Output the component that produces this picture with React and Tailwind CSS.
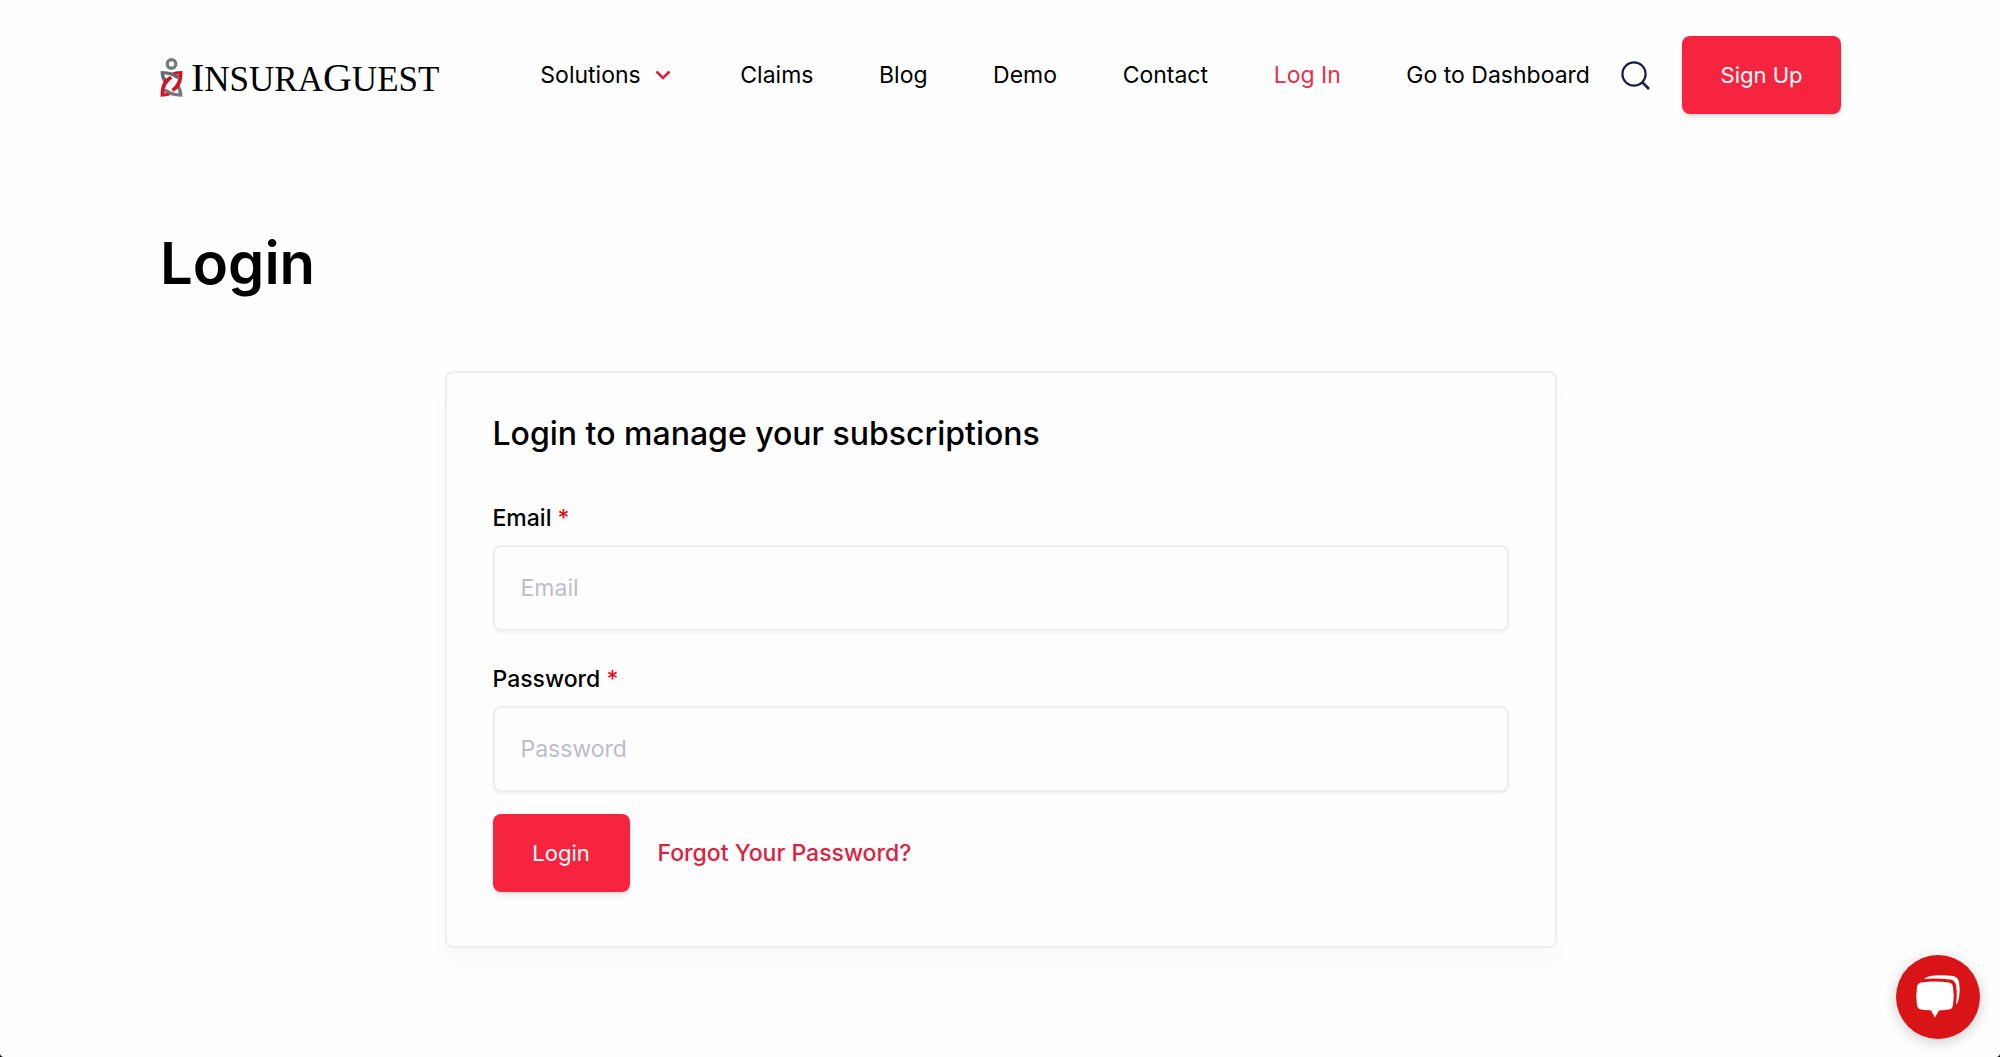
import React, { useState } from "react";

const navLinks = [
  { label: "Claims", href: "#claims" },
  { label: "Blog", href: "#blog" },
  { label: "Demo", href: "#demo" },
  { label: "Contact", href: "#contact" },
  { label: "Log In", href: "#login", active: true },
  { label: "Go to Dashboard", href: "#dashboard" },
];

const Logo = () => (
  <a href="#home" className="flex items-center gap-2 pt-1 text-black shrink-0">
    <svg width="23" height="39" viewBox="0 0 68 118" fill="none" aria-hidden="true">
      <circle cx="34" cy="18" r="13" stroke="#77787b" strokeWidth="10" />
      <path d="M1 39 Q22 39 38 44 L58 54 L52 64 L34 54 Q22 49 12 49 Q12 58 20 66 L12 76 Q1 62 1 39 Z" fill="#66686b" />
      <path d="M67 117 Q46 117 30 112 L10 102 L16 92 L34 102 Q46 107 56 107 Q56 98 49 90 L57 80 Q67 94 67 117 Z" fill="#77787b" />
      <path d="M38 43 Q50 39 67 39 Q68 66 60 82 Q52 96 40 102 L34 94 Q44 88 50 75 Q56 64 56 49 Q50 49 45 51 Z" fill="#cf1522" />
      <path d="M30 113 Q18 117 1 117 Q0 92 8 76 Q16 62 30 54 L36 63 Q24 70 18 82 Q12 94 12 107 Q18 107 23 105 Z" fill="#cf1522" />
    </svg>
    <span className="pt-1 font-['Liberation_Serif',serif] text-[35px] leading-[40px]">
      <span className="text-[40px]">I</span>NSURA
      <span className="text-[40px]">G</span>UEST
    </span>
  </a>
);

const Header = () => (
  <header className="flex items-center h-[150px]">
    <Logo />
    <nav className="flex flex-1 items-center justify-between ml-[101px] mr-[31px] text-[23px] text-black">
      <button type="button" className="flex items-center gap-[14px] mr-1">
        Solutions
        <svg width="16" height="10" viewBox="0 0 16 10" fill="none" aria-hidden="true">
          <path d="M1.5 1.5 L8 8 L14.5 1.5" stroke="#dc2038" strokeWidth="2.6" />
        </svg>
      </button>
      {navLinks.map((link) => (
        <a
          key={link.label}
          href={link.href}
          className={link.active ? "text-[#ea3048]" : "text-black"}
        >
          {link.label}
        </a>
      ))}
    </nav>
    <button type="button" aria-label="Search" className="mr-8">
      <svg width="29" height="29" viewBox="0 0 29 29" fill="none" aria-hidden="true">
        <circle cx="13" cy="13" r="11.6" stroke="#1c1c50" strokeWidth="2.2" />
        <path d="M21 21 L28 28" stroke="#1c1c50" strokeWidth="2.6" />
      </svg>
    </button>
    <button
      type="button"
      className="w-[159px] h-[78px] rounded-lg bg-[#f6243f] text-white text-[22px] shadow-md"
    >
      Sign Up
    </button>
  </header>
);

const Field = ({ id, label, type, value, onChange }) => (
  <div>
    <label htmlFor={id} className="block text-[23px] leading-[32px] font-medium text-black mb-[11px]">
      {label} <span className="text-[#e01020]">*</span>
    </label>
    <input
      id={id}
      name={id}
      type={type}
      placeholder={label}
      value={value}
      onChange={onChange}
      className="block w-full h-[86px] px-[26px] rounded-lg border-2 border-[#eeeeef] bg-[#fefefe] text-[23px] shadow-[0_2px_3px_rgba(0,0,0,0.05)] placeholder:text-[#bdbdca] focus:outline-none"
    />
  </div>
);

const LoginForm = () => {
  const [formData, setFormData] = useState({ email: "", password: "" });

  const handleChange = (e) => {
    setFormData({ ...formData, [e.target.name]: e.target.value });
  };

  return (
    <form
      onSubmit={(e) => e.preventDefault()}
      className="w-full max-w-[1112px] mx-auto px-[46px] pt-[39px] pb-[54px] rounded-lg border-2 border-[#eeeeef] shadow-[0_16px_24px_rgba(0,0,0,0.02)]"
    >
      <h2 className="text-[32px] leading-[44px] font-medium text-black mb-[46px]">
        Login to manage your subscriptions
      </h2>
      <div className="flex flex-col gap-8 mb-[22px]">
        <Field id="email" label="Email" type="email" value={formData.email} onChange={handleChange} />
        <Field
          id="password"
          label="Password"
          type="password"
          value={formData.password}
          onChange={handleChange}
        />
      </div>
      <div className="flex items-center gap-7">
        <button
          type="submit"
          className="w-[137px] h-[78px] rounded-lg bg-[#f6243f] text-white text-[22px] shadow-md"
        >
          Login
        </button>
        <a href="#forgot" className="text-[23px] font-medium text-[#dc2240]">
          Forgot Your Password?
        </a>
      </div>
    </form>
  );
};

const ChatButton = () => (
  <button
    type="button"
    aria-label="Open chat"
    className="fixed right-5 bottom-[18px] size-[84px] rounded-full bg-[#d81416] shadow-[0_3px_14px_rgba(0,0,0,0.2)]"
  >
    <svg width="84" height="84" viewBox="0 0 84 84" fill="#fff" aria-hidden="true">
      <path d="M28 24 Q31 21 38 20.5 Q50 20 57 21 Q62 22 63 27 Q64.500 35 63 43 Q62 48 60 50 Q61.500 38 60 30 Q59 25 54 24.500 Q40 23 28 24 Z" />
      <path d="M25 27.500 Q39 25.500 53 27.500 Q56.500 28 57 32 Q58.500 41 57 50 Q56.500 54 53 54.500 L43 55.500 L39 62.500 L35 55.500 L25 54.500 Q21.500 54 21 50 Q19.500 41 21 32 Q21.500 28 25 27.500 Z" />
    </svg>
  </button>
);

const App = () => {
  return (
    <div className="min-h-screen bg-[#fefefe] font-[Inter,sans-serif]">
      <div className="max-w-[1746px] mx-auto pl-[33px] pr-8 pb-16">
        <Header />
        <main>
          <h1 className="text-[58px] leading-[72px] font-semibold text-black mt-[77px] mb-[72px]">
            Login
          </h1>
          <LoginForm />
        </main>
      </div>
      <ChatButton />
      <svg className="fixed left-0 bottom-0" width="4" height="4" viewBox="0 0 4 4" aria-hidden="true">
        <path d="M0 0 Q0 4 4 4 H0 Z" />
      </svg>
      <svg className="fixed right-0 bottom-0" width="4" height="4" viewBox="0 0 4 4" aria-hidden="true">
        <path d="M4 0 Q4 4 0 4 H4 Z" />
      </svg>
    </div>
  );
};

export default App;
